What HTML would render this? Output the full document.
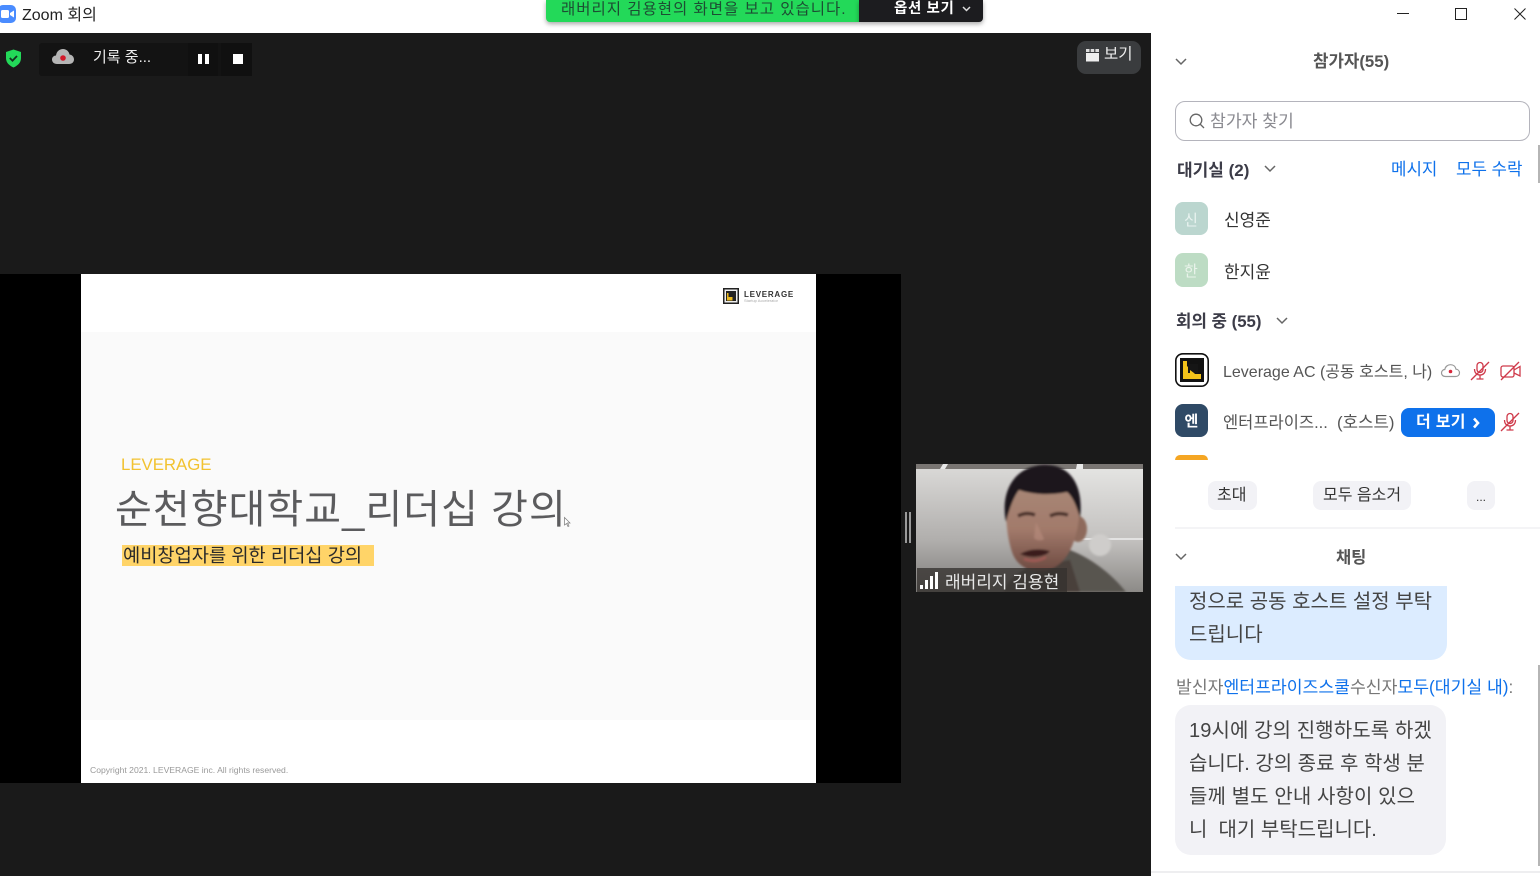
<!DOCTYPE html>
<html lang="ko"><head><meta charset="utf-8"><title>Zoom 회의</title>
<style>
html,body{margin:0;padding:0;width:1540px;height:876px;overflow:hidden;background:#fff}
body{position:relative;font-family:"Liberation Sans","Noto Sans CJK KR",sans-serif;color:#333}
.a{position:absolute}
.t{position:absolute;white-space:nowrap;line-height:1}
svg{position:absolute;overflow:visible}
.blue{color:#0e71eb}
</style></head><body>

<!-- title bar -->
<svg style="left:0;top:5px" width="17" height="18" viewBox="0 0 17 18"><rect x="-2" y="0" width="18" height="18" rx="5" fill="#4a8cff"/><rect x="1" y="5" width="8" height="8" rx="1.5" fill="#fff"/><path d="M10 8l4-2.500v7l-4-2.500z" fill="#fff"/></svg>
<div class="t" style="left:22px;top:8px;font-size:16px;color:#222">Zoom 회의</div>

<!-- notification bar -->
<div class="a" style="left:546px;top:0;width:313px;height:22px;background:#23d959;border-radius:0 0 0 4px;box-shadow:0 2px 5px rgba(0,0,0,.35)"></div>
<div class="a" style="left:859px;top:0;width:124px;height:22px;background:#1c1c1f;border-radius:0 0 4px 0;box-shadow:0 2px 5px rgba(0,0,0,.35)"></div>
<div class="t" style="left:561px;top:2px;font-size:15.500px;letter-spacing:.98px;color:#1d4d33">래버리지 김용현의 화면을 보고 있습니다.</div>
<div class="t" style="left:894px;top:2px;font-size:14.500px;font-weight:bold;letter-spacing:.6px;color:#fff">옵션 보기</div>
<svg style="left:962px;top:6px" width="9" height="6"><path d="M1 1l3.500 3.500L8 1" fill="none" stroke="#ddd" stroke-width="1.500"/></svg>

<!-- window controls -->
<svg style="left:1397px;top:13px" width="13" height="2"><path d="M0 .5h12" stroke="#222"/></svg>
<svg style="left:1455px;top:8px" width="12" height="12"><rect x=".5" y=".5" width="11" height="11" fill="none" stroke="#222"/></svg>
<svg style="left:1514px;top:8px" width="12" height="12"><path d="M.5.5l11 11M11.500.5l-11 11" stroke="#222" fill="none"/></svg>

<!-- main dark area -->
<div class="a" style="left:0;top:33px;width:1151px;height:843px;background:#1a1a1a"></div>

<!-- shield -->
<svg style="left:5px;top:49px" width="17" height="19" viewBox="0 0 17 19"><path d="M8.500.5l7.500 2.500v6c0 4.500-3 7.500-7.500 9.500C4 16.500 1 13.500 1 9V3z" fill="#23d959"/><path d="M4.800 9l2.700 2.700 4.500-4.700" fill="none" stroke="#14301f" stroke-width="1.800"/></svg>

<!-- record pill -->
<div class="a" style="left:39px;top:43px;width:213px;height:33px;background:#131313;border-radius:3px"></div>
<div class="a" style="left:188px;top:43px;width:30px;height:33px;background:#101010"></div>
<div class="a" style="left:221px;top:43px;width:31px;height:33px;background:#101010"></div>
<svg style="left:52px;top:48px" width="22" height="18" viewBox="0 0 22 18"><path d="M5 16C2 16 0 14 0 11.500 0 9 2 7.500 4 7.500 4.500 3.500 7.500 1 11 1c3.500 0 6 2.500 6.500 5.500 2.500.3 4.500 2.300 4.500 5 0 2.500-2 4.500-5 4.500z" fill="#b5b5b5"/><circle cx="11" cy="10" r="2.800" fill="#d21a2b"/></svg>
<div class="t" style="left:93px;top:49.500px;font-size:15px;color:#eee">기록 중...</div>
<div class="a" style="left:198px;top:54px;width:4px;height:10px;background:#fff"></div>
<div class="a" style="left:205px;top:54px;width:4px;height:10px;background:#fff"></div>
<div class="a" style="left:233px;top:54px;width:10px;height:10px;background:#fff"></div>

<!-- view button -->
<div class="a" style="left:1077px;top:41px;width:64px;height:33px;background:#3a3c3e;border-radius:9px"></div>
<svg style="left:1086px;top:49px" width="13" height="13" viewBox="0 0 13 13"><rect x="0" y="0" width="3.500" height="3" fill="#ddd"/><rect x="4.700" y="0" width="3.500" height="3" fill="#ddd"/><rect x="9.400" y="0" width="3.600" height="3" fill="#ddd"/><rect x="0" y="4" width="13" height="8.500" fill="#eee"/></svg>
<div class="t" style="left:1104px;top:47px;font-size:15.500px;color:#eee">보기</div>

<!-- shared screen -->
<div class="a" style="left:0;top:274px;width:901px;height:509px;background:#000"></div>
<div class="a" style="left:81px;top:274px;width:735px;height:509px;background:#fff"></div>
<div class="a" style="left:81px;top:332px;width:735px;height:388px;background:#fafafa"></div>
<svg style="left:723px;top:288px" width="16" height="16" viewBox="0 0 16 16"><rect width="16" height="16" fill="#222"/><rect x="1.500" y="1.500" width="13" height="13" fill="#eee"/><rect x="3" y="3" width="10" height="10" fill="#222"/><path d="M4 12.500V5h1.500v4h4v3.500z" fill="#e9b81f"/></svg>
<div class="t" style="left:744px;top:290.500px;font-size:8px;font-weight:bold;letter-spacing:.75px;color:#333">LEVERAGE</div>
<div class="t" style="left:744px;top:299px;font-size:4px;color:#aaa">Startup Accelerator</div>
<div class="t" style="left:121px;top:456.500px;font-size:16.800px;color:#f2c230">LEVERAGE</div>
<div class="t" style="left:115px;top:490px;font-size:40px;letter-spacing:1.050px;color:#5b5b5d">순천향대학교_리더십 강의</div>
<div class="a" style="left:122px;top:545px;width:252px;height:21px;background:#ffd468"></div>
<div class="t" style="left:123px;top:547px;font-size:18.700px;color:#2a2a2a">예비창업자를 위한 리더십 강의</div>
<svg style="left:564px;top:517px" width="7" height="10" viewBox="0 0 7 10"><path d="M.5.5v7.500l2-1.500 1.500 3 1-.5-1.500-3h2.500z" fill="#fff" stroke="#777" stroke-width=".7"/></svg>
<div class="t" style="left:90px;top:766px;font-size:8.600px;color:#999">Copyright 2021. LEVERAGE inc. All rights reserved.</div>

<!-- splitter -->
<div class="a" style="left:905px;top:512px;width:2px;height:31px;background:#9a9a9a"></div>
<div class="a" style="left:909px;top:512px;width:2px;height:31px;background:#9a9a9a"></div>

<!-- video -->
<svg style="left:916px;top:464px" width="227" height="128" viewBox="0 0 227 128">
<defs>
<linearGradient id="wall" x1="0" y1="0" x2="0" y2="1"><stop offset="0" stop-color="#e6e6e4"/><stop offset=".6" stop-color="#c2c0be"/><stop offset="1" stop-color="#8c8a87"/></linearGradient>
<linearGradient id="wallL" x1="0" y1="0" x2="0" y2="1"><stop offset="0" stop-color="#dcdbd9"/><stop offset=".6" stop-color="#b0aeac"/><stop offset="1" stop-color="#7c7a78"/></linearGradient>
<linearGradient id="face" x1="0" y1="0" x2="0" y2="1"><stop offset="0" stop-color="#a98a78"/><stop offset=".55" stop-color="#a27a6b"/><stop offset="1" stop-color="#6d4a41"/></linearGradient>
<clipPath id="vc"><rect width="227" height="128"/></clipPath>
<filter id="b1" x="-10%" y="-10%" width="120%" height="120%"><feGaussianBlur stdDeviation="1"/></filter>
</defs>
<g clip-path="url(#vc)">
<rect width="227" height="128" fill="url(#wallL)"/>
<rect x="130" width="97" height="128" fill="url(#wall)"/>
<rect y="0" width="227" height="5" fill="#7a7673"/>
<path d="M24 5l3-5h5l-3 5zM160 5l1-5h6l0 5z" fill="#e8e8e8"/>
<path d="M162 75h66" stroke="#eee" stroke-width="1.500"/>
<circle cx="184" cy="81" r="11" fill="#cfcdcb" filter="url(#b1)"/>
<g filter="url(#b1)">
<path d="M88 128c4-14 20-24 34-28l32-14c20 8 40 22 56 42z" fill="#595450"/>
<path d="M114 128l8-26 32-6 10 32z" fill="#4a3f3a"/>
<ellipse cx="162" cy="65" rx="9" ry="13" fill="#8e6a5c"/>
<path d="M90 42c0 20 2 34 6 46 4 12 14 19 28 19 22 0 38-22 40-65 0-16-18-28-38-28-20 0-36 12-36 28z" fill="url(#face)"/>
<path d="M90 58C84 28 98 2 128 1c26-1 40 20 36 53-4-14-8-22-13-26-18 4-36 2-48-2-6 8-10 20-13 32z" fill="#1b191a"/>
<path d="M102 52c6-3 12-3 17-1M134 52c6-3 12-3 18-1" stroke="#4a3029" stroke-width="3.500" fill="none"/>
<path d="M120 58l-2 16c3 3 8 3 10 1z" fill="#b58a7b" opacity=".7"/>
<path d="M104 90c8-5 20-6 30-3-4 6-20 8-30 3z" fill="#3a1f1d"/>
<path d="M108 95c8 3 16 2 22-2" stroke="#a05a55" stroke-width="2.500" fill="none"/>
</g>
<rect x="1" y="104" width="150" height="24" fill="#34312e" fill-opacity=".78"/>
<rect x="4" y="121" width="3" height="4" fill="#fff"/><rect x="9" y="116" width="3" height="9" fill="#fff"/><rect x="14" y="112" width="3" height="13" fill="#fff"/><rect x="19" y="108" width="3" height="17" fill="#fff"/>
</g>
</svg>
<div class="t" style="left:945px;top:574px;font-size:17px;color:#e8e8e8">래버리지 김용현</div>

<!-- right panel -->
<svg style="left:1175px;top:58px" width="12" height="8"><path d="M1 1l5 5 5-5" fill="none" stroke="#666" stroke-width="1.500"/></svg>
<div class="t" style="left:1313px;top:54px;font-size:16.800px;font-weight:bold;color:#555">참가자(55)</div>

<div class="a" style="left:1175px;top:101px;width:353px;height:38px;border:1px solid #b4b4bc;border-radius:10px;background:#fff"></div>
<svg style="left:1189px;top:113px" width="16" height="16" viewBox="0 0 16 16"><circle cx="7" cy="7" r="5.800" fill="none" stroke="#666" stroke-width="1.300"/><path d="M11 11l4 4" stroke="#666" stroke-width="1.300"/></svg>
<div class="t" style="left:1210px;top:112.500px;font-size:17.200px;color:#8a8a90">참가자 찾기</div>

<div class="a" style="left:1538px;top:145px;width:2px;height:38px;background:#b5b5b5"></div>

<div class="t" style="left:1177px;top:161.500px;font-size:17px;font-weight:bold;color:#3c3c48">대기실 (2)</div>
<svg style="left:1264px;top:165px" width="12" height="8"><path d="M1 1l5 5 5-5" fill="none" stroke="#666" stroke-width="1.500"/></svg>
<div class="t blue" style="left:1391px;top:162px;font-size:16.800px">메시지</div>
<div class="t blue" style="left:1456px;top:162px;font-size:16.800px">모두 수락</div>

<div class="a" style="left:1175px;top:202px;width:33px;height:33px;border-radius:8px;background:#bbd6cf"></div>
<div class="t" style="left:1184px;top:212.500px;font-size:15px;color:#e9f3f0">신</div>
<div class="t" style="left:1224px;top:212px;font-size:17px;color:#333">신영준</div>
<div class="a" style="left:1175px;top:253px;width:33px;height:34px;border-radius:8px;background:#bddcc4"></div>
<div class="t" style="left:1184px;top:263.500px;font-size:15px;color:#e9f3ea">한</div>
<div class="t" style="left:1224px;top:264px;font-size:17px;color:#333">한지윤</div>

<div class="t" style="left:1176px;top:314px;font-size:16.800px;font-weight:bold;color:#3c3c48">회의 중 (55)</div>
<svg style="left:1276px;top:317px" width="12" height="8"><path d="M1 1l5 5 5-5" fill="none" stroke="#666" stroke-width="1.500"/></svg>

<!-- Leverage row -->
<svg style="left:1175px;top:353px" width="34" height="34" viewBox="0 0 34 34"><rect x=".8" y=".8" width="32.400" height="32.400" rx="7" fill="#fff" stroke="#111" stroke-width="1.600"/><rect x="5" y="5" width="24" height="24" fill="#111"/><path d="M8 9v17h17z" fill="#f2c21a"/><rect x="8" y="8" width="4" height="18" fill="#f2c21a"/><rect x="12" y="21" width="14" height="5" fill="#f2c21a"/><rect x="13" y="11" width="10" height="9" fill="#151515"/><path d="M15 17v3h4z" fill="#f2c21a"/></svg>
<div class="t" style="left:1223px;top:365px;font-size:16px;color:#555">Leverage AC (공동 호스트, 나)</div>
<svg style="left:1441px;top:364px" width="19" height="13" viewBox="0 0 19 13"><path d="M4.500 12.500C2 12.500.5 11 .5 9 .5 7 2 5.500 3.800 5.500 4.300 2.500 6.800.7 9.500.7c3 0 5 2 5.500 4.500 2 .2 3.500 1.700 3.500 3.700 0 2-1.500 3.600-4 3.600z" fill="none" stroke="#999" stroke-width="1.200"/><circle cx="9.500" cy="7.500" r="1.800" fill="#d8263a"/></svg>
<svg style="left:1470px;top:361px" width="20" height="20" viewBox="0 0 20 20" fill="none" stroke="#cf3a4a" stroke-width="1.300"><rect x="7" y="1.500" width="6" height="10" rx="3"/><path d="M4.500 8c0 4 2.500 6 5.500 6s5.500-2 5.500-6M10 14v3.500M6.500 18h7"/><path d="M1 19L19 1"/></svg>
<svg style="left:1500px;top:361px" width="21" height="20" viewBox="0 0 21 20" fill="none" stroke="#cf3a4a" stroke-width="1.300"><rect x="1" y="5" width="13" height="11" rx="2"/><path d="M14 9l6-3.500v9.500L14 12"/><path d="M1 19L19 1"/></svg>

<!-- Enterprise row -->
<div class="a" style="left:1175px;top:404px;width:33px;height:33px;border-radius:8px;background:#2f4a66"></div>
<div class="t" style="left:1184.500px;top:413.500px;font-size:15px;font-weight:bold;color:#fff">엔</div>
<div class="t" style="left:1223px;top:415px;font-size:16.500px;color:#555">엔터프라이즈...</div>
<div class="t" style="left:1337px;top:415px;font-size:16.800px;color:#555">(호스트)</div>
<div class="a" style="left:1401px;top:408px;width:94px;height:29px;border-radius:8px;background:#0e71eb"></div>
<div class="t" style="left:1416px;top:415px;font-size:16px;font-weight:bold;color:#fff;letter-spacing:.3px">더 보기</div>
<svg style="left:1472px;top:417px" width="9" height="12"><path d="M2 1.500l4 4.500-4 4.500" fill="none" stroke="#fff" stroke-width="2.600"/></svg>
<svg style="left:1500px;top:412px" width="20" height="20" viewBox="0 0 20 20" fill="none" stroke="#cf3a4a" stroke-width="1.300"><rect x="7" y="1.500" width="6" height="10" rx="3"/><path d="M4.500 8c0 4 2.500 6 5.500 6s5.500-2 5.500-6M10 14v3.500M6.500 18h7"/><path d="M1 19L19 1"/></svg>

<!-- clipped orange avatar -->
<div class="a" style="left:1175px;top:455px;width:33px;height:5px;background:#f5a623;border-radius:8px 8px 0 0"></div>

<!-- action buttons -->
<div class="a" style="left:1208px;top:481px;width:49px;height:29px;border-radius:8px;background:#f2f2f6"></div>
<div class="t" style="left:1217px;top:487.500px;font-size:16px;color:#333">초대</div>
<div class="a" style="left:1313px;top:481px;width:98px;height:29px;border-radius:8px;background:#f2f2f6"></div>
<div class="t" style="left:1323px;top:487.500px;font-size:16px;color:#333">모두 음소거</div>
<div class="a" style="left:1467px;top:481px;width:28px;height:29px;border-radius:8px;background:#f2f2f6"></div>
<div class="t" style="left:1476px;top:491px;font-size:12px;color:#333">...</div>

<div class="a" style="left:1175px;top:527px;width:365px;height:2px;background:#f4f4f6"></div>

<svg style="left:1175px;top:553px" width="12" height="8"><path d="M1 1l5 5 5-5" fill="none" stroke="#666" stroke-width="1.500"/></svg>
<div class="t" style="left:1336px;top:549.500px;font-size:16.500px;font-weight:bold;color:#555">채팅</div>

<!-- chat -->
<div class="a" style="left:1175px;top:586px;width:272px;height:74px;background:#dcecff;border-radius:0 0 16px 16px"></div>
<div class="t" style="left:1189px;top:592px;font-size:20px;color:#444">정으로 공동 호스트 설정 부탁</div>
<div class="t" style="left:1189px;top:625px;font-size:20px;color:#444">드립니다</div>

<div class="t" style="left:1176px;top:679px;font-size:17.200px;color:#777">발신자<span class="blue">엔터프라이즈스쿨</span>수신자<span class="blue">모두(대기실 내)</span>:</div>

<div class="a" style="left:1175px;top:705px;width:271px;height:150px;background:#f2f2f6;border-radius:16px"></div>
<div class="t" style="left:1189px;top:721px;font-size:20px;letter-spacing:.1px;color:#444">19시에 강의 진행하도록 하겠</div>
<div class="t" style="left:1189px;top:754px;font-size:20px;color:#444">습니다. 강의 종료 후 학생 분</div>
<div class="t" style="left:1189px;top:787px;font-size:20px;letter-spacing:.1px;color:#444">들께 별도 안내 사항이 있으</div>
<div class="t" style="left:1189px;top:820px;font-size:20px;color:#444">니&nbsp; 대기 부탁드립니다.</div>

<div class="a" style="left:1538px;top:665px;width:2px;height:201px;background:#b5b5b5"></div>
<div class="a" style="left:1151px;top:871px;width:389px;height:2px;background:#eeeef0"></div>

</body></html>
